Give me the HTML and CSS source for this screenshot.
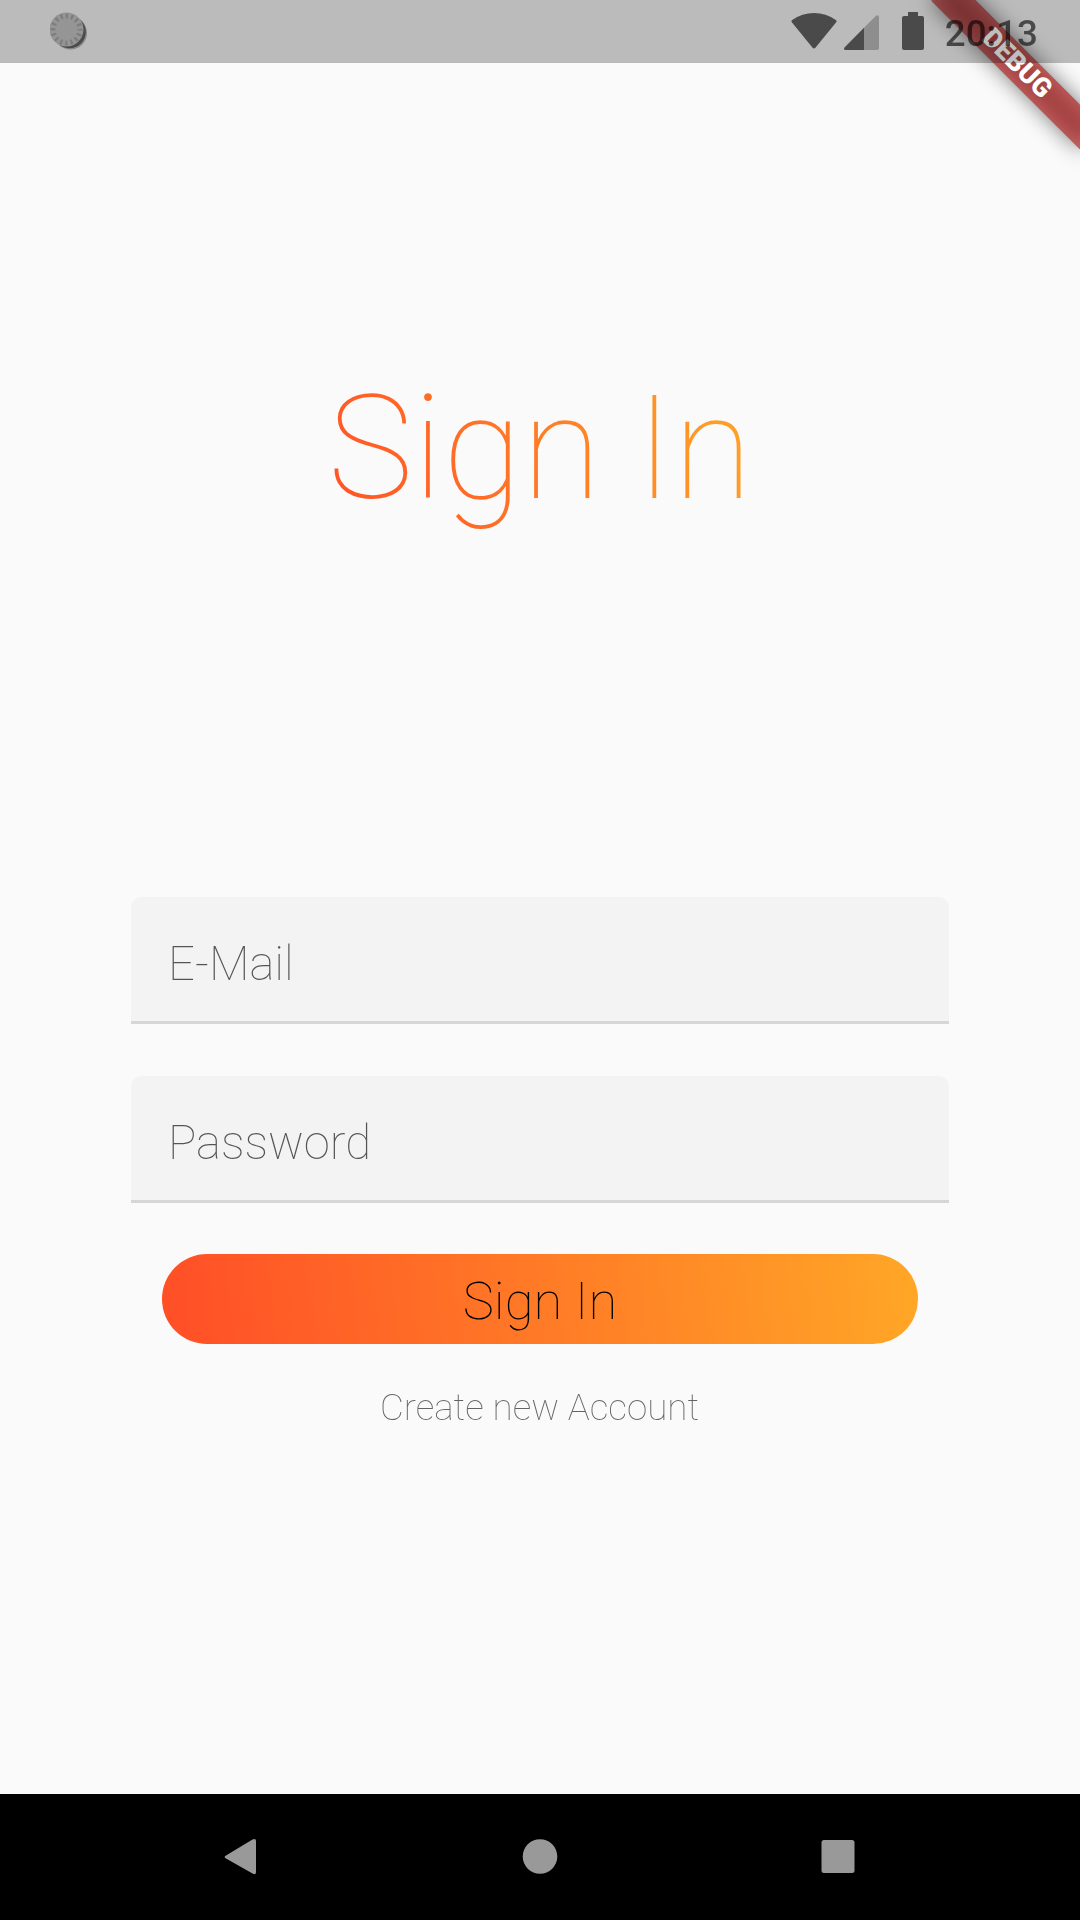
FILE: index.html
```html
<!DOCTYPE html>
<html lang="en">
<head>
<meta charset="utf-8">
<title>Sign In</title>
<link rel="stylesheet" href="styles.css">
</head>
<body>
<div class="screen">
  <main class="app">
    <h1 class="title">Sign In</h1>
    <form class="form">
      <input class="field" type="text" placeholder="E-Mail" aria-label="E-Mail">
      <input class="field field-password" type="password" placeholder="Password" aria-label="Password">
      <button class="submit" type="button">Sign In</button>
      <a class="create">Create new Account</a>
    </form>
    <div class="banner">
      <div class="banner-shadow"></div>
      <div class="banner-label">DEBUG</div>
    </div>
  </main>
  <header class="status">
    <svg class="spinner" width="38" height="40" viewBox="0 0 38 40">
      <circle cx="20.5" cy="21" r="16.500" fill="#8a8a8a"/>
      <circle cx="19.500" cy="20" r="16.300" fill="#4b4b4b"/>
      <circle cx="16.500" cy="17.500" r="17" fill="#959595"/>
      <circle cx="16.500" cy="17.500" r="13.500" fill="none" stroke="#7d7d7d" stroke-width="5" stroke-dasharray="2.2 3.101" stroke-dashoffset="1.1"/>
    </svg>
    <div class="status-right">
      <svg class="wifi" width="46" height="38" viewBox="0 0 46 38">
        <path d="M1 10.500Q-.3 9 1.200 8Q11 1 23 1Q35 1 44.800 8Q46.300 9 45 10.500L24.600 35.500Q23 37.500 21.400 35.500Z"/>
      </svg>
      <svg class="signal" width="35" height="35" viewBox="0 0 35 35">
        <path d="M20 12.800L32 .8Q35 -.8 35 2V33Q35 35 33 35H20Z" fill-opacity=".4"/>
        <path d="M20 12.800V35H1.500Q-.8 35 .5 32.500Z"/>
      </svg>
      <svg class="battery" width="22" height="38" viewBox="0 0 22 38">
        <path d="M6 0H16V4H20Q22 4 22 6V36Q22 38 20 38H2Q0 38 0 36V6Q0 4 2 4H6Z"/>
      </svg>
      <span class="clock">20:13</span>
    </div>
  </header>
  <nav class="nav">
    <svg width="36" height="38" viewBox="0 0 36 38"><path d="M3 17.500L29.500 1.500Q33 0 33 3V34Q33 37.500 29.500 35.500L3 20.500Q.3 19 3 17.500Z"/></svg>
    <svg width="36" height="38" viewBox="0 0 36 38"><circle cx="18" cy="18.500" r="17.300"/></svg>
    <svg width="36" height="38" viewBox="0 0 36 38"><rect x="1.500" y="2" width="33" height="33" rx="2.500"/></svg>
  </nav>
</div>
</body>
</html>
```
FILE: styles.css
```css
* {
  box-sizing: border-box;
}

body {
  margin: 0;
  font-family: Roboto, sans-serif;
  font-weight: 100;
}

.screen {
  position: relative;
  display: flex;
  flex-direction: column;
  width: 1080px;
  height: 1920px;
  overflow: hidden;
}

.app {
  position: relative;
  flex: 1;
  display: flex;
  flex-direction: column;
  align-items: center;
  padding-top: 364px;
  overflow: hidden;
  background: #fafafa;
}

.title {
  margin: 0;
  font-size: 144.375px;
  font-weight: 100;
  line-height: 169px;
  background: linear-gradient(67deg, #ff5027, #ffa726);
  background-clip: text;
  -webkit-background-clip: text;
  color: transparent;
}

.form {
  display: flex;
  flex-direction: column;
  align-items: center;
  width: 818px;
  margin-top: 364px;
}

.field {
  width: 100%;
  height: 127px;
  margin-bottom: 51.500px;
  padding: 9px 32px 0 37px;
  border: 0;
  border-bottom: 3px solid #d6d6d6;
  border-radius: 10px 10px 0 0;
  background: #f3f3f3;
  font: 100 47.250px Roboto, sans-serif;
  color: #000;
  outline: 0;
}

.field-password {
  padding-top: 11px;
}

.field::placeholder {
  color: #000;
  opacity: 0.65;
}

.submit {
  width: 756px;
  height: 90px;
  padding: 3px 0 0;
  border: 0;
  border-radius: 45px;
  background: linear-gradient(83.200deg, #ff4e27, #ffa726);
  font: 100 52.500px Roboto, sans-serif;
  color: #000;
}

.create {
  margin: 42px 1px 0 0;
  font-size: 36.750px;
  line-height: 43px;
  color: #000;
  opacity: 0.6;
}

/* Diagonal ribbon lying over the top right corner */
.banner {
  position: absolute;
  top: 73.500px;
  left: 975px;
  width: 210px;
  height: 31.500px;
  transform-origin: 105px -73.500px;
  transform: rotate(45deg);
}

.banner-shadow {
  position: absolute;
  inset: 0;
  background: rgba(0, 0, 0, 0.5);
  filter: blur(10.400px);
}

.banner-label {
  position: relative;
  height: 100%;
  background: rgba(183, 28, 28, 0.63);
  color: #fff;
  font-size: 26.775px;
  font-weight: 900;
  line-height: 31.500px;
  text-align: center;
}

.status {
  position: absolute;
  top: 0;
  left: 0;
  display: flex;
  justify-content: space-between;
  width: 100%;
  height: 63px;
  padding: 12px 42px 0 50px;
  background: rgba(0, 0, 0, 0.25);
}

.status-right {
  display: flex;
  fill: #000;
  opacity: 0.6;
}

.signal {
  margin: 3px 23px 0 7px;
}

.clock {
  margin-left: 21px;
  font-size: 36.750px;
  font-weight: 500;
  line-height: 43px;
}

.nav {
  display: flex;
  justify-content: center;
  align-items: center;
  gap: 262.500px;
  height: 126px;
  padding-right: 1px;
  background: #000;
  fill: #999;
}
```
